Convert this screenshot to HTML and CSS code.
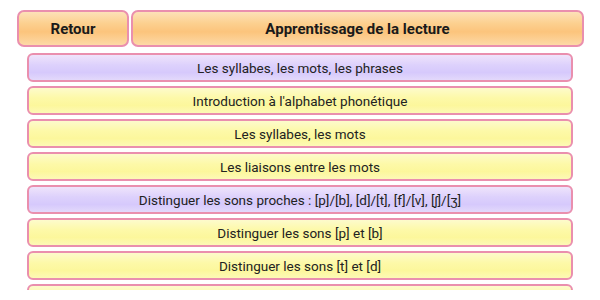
FILE: index.html
```html
<!DOCTYPE html>
<html lang="fr">
<head>
<meta charset="utf-8">
<link rel="stylesheet" href="styles.css">
</head>
<body>
<div class="page">
  <div class="header">
    <div class="hbtn back">Retour</div>
    <div class="hbtn title">Apprentissage de la lecture</div>
  </div>
  <div class="list">
    <div class="row purple">Les syllabes, les mots, les phrases</div>
    <div class="row yellow">Introduction à l'alphabet phonétique</div>
    <div class="row yellow">Les syllabes, les mots</div>
    <div class="row yellow">Les liaisons entre les mots</div>
    <div class="row purple">Distinguer les sons proches : [p]/[b], [d]/[t], [f]/[v], [ʃ]/[ʒ]</div>
    <div class="row yellow">Distinguer les sons [p] et [b]</div>
    <div class="row yellow">Distinguer les sons [t] et [d]</div>
    <div class="row yellow"></div>
  </div>
</div>
</body>
</html>
```

FILE: styles.css
```css
html, body {
  margin: 0;
  padding: 0;
  background: #ffffff;
}
body {
  font-family: Roboto, "Liberation Sans", sans-serif;
  color: #1e1e1e;
}
.page {
  padding: 10px 0 0 17px;
  width: 567px;
}
.header {
  display: flex;
  gap: 2px;
  height: 37px;
}
.hbtn {
  box-sizing: border-box;
  border: 2px solid #ea8fae;
  border-radius: 7px;
  background: linear-gradient(to bottom, #fde1b8 0%, #fcd08f 35%, #fcc47c 60%, #fdd9a6 100%);
  display: flex;
  align-items: center;
  justify-content: center;
  font-weight: bold;
  font-size: 15px;
  color: #1a1a1a;
}
.back {
  width: 112px;
}
.title {
  flex: 1;
}
.list {
  margin: 6px 0 0 10px;
  width: 546px;
  height: 237px;
  overflow: hidden;
  display: flex;
  flex-direction: column;
  gap: 4px;
}
.row {
  box-sizing: border-box;
  flex: 0 0 29px;
  border: 2px solid #ea8fae;
  border-radius: 6px;
  display: flex;
  align-items: center;
  justify-content: center;
  font-size: 13.5px;
  color: #222;
}
.purple {
  background: linear-gradient(to bottom, #efe4fb 0%, #ddd1fc 40%, #d6c9fc 70%, #e3d9fb 100%);
}
.yellow {
  background: linear-gradient(to bottom, #fdfbcc 0%, #fdf9a8 40%, #fcf79c 70%, #fdf9b6 100%);
}
```
